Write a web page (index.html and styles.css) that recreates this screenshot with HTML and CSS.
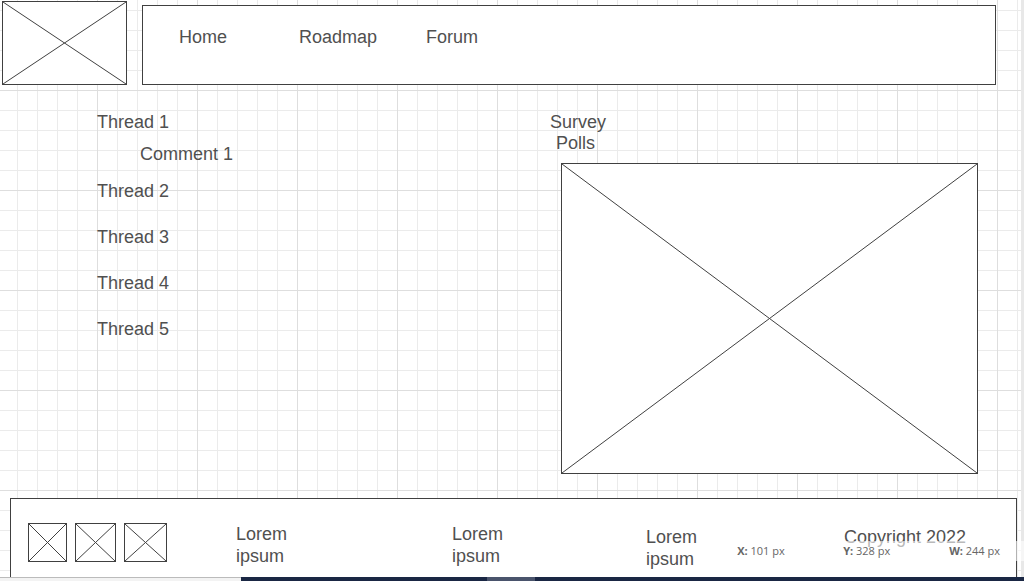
FILE: index.html
```html
<!DOCTYPE html>
<html lang="en">
<head>
<meta charset="utf-8">
<title>Forum wireframe</title>
<link rel="stylesheet" href="styles.css">
</head>
<body>
<div class="canvas">
  <header class="header">
    <svg class="placeholder logo" viewBox="0 0 100 100" preserveAspectRatio="none" role="img" aria-label="Logo"><path d="M0 0L100 100M100 0L0 100"/></svg>
    <nav class="nav">
      <a href="#home">Home</a>
      <a href="#roadmap">Roadmap</a>
      <a href="#forum">Forum</a>
    </nav>
  </header>

  <main class="main">
    <ul class="threads">
      <li>Thread 1
        <ul class="comments"><li>Comment 1</li></ul>
      </li>
      <li>Thread 2</li>
      <li>Thread 3</li>
      <li>Thread 4</li>
      <li>Thread 5</li>
    </ul>
    <section class="survey">
      <h2 class="survey-title">Survey<br>Polls&nbsp;</h2>
      <svg class="placeholder poll" viewBox="0 0 100 100" preserveAspectRatio="none" role="img" aria-label="Poll"><path d="M0 0L100 100M100 0L0 100"/></svg>
    </section>
  </main>

  <footer class="footer">
    <div class="socials">
      <svg class="placeholder social small" viewBox="0 0 100 100" preserveAspectRatio="none"><path d="M0 0L100 100M100 0L0 100"/></svg>
      <svg class="placeholder social medium" viewBox="0 0 100 100" preserveAspectRatio="none"><path d="M0 0L100 100M100 0L0 100"/></svg>
      <svg class="placeholder social large" viewBox="0 0 100 100" preserveAspectRatio="none"><path d="M0 0L100 100M100 0L0 100"/></svg>
    </div>
    <p class="footer-text">Lorem<br>ipsum</p>
    <p class="footer-text">Lorem<br>ipsum</p>
    <p class="footer-text lower">Lorem<br>ipsum</p>
    <p class="footer-text lower">Copyright 2022</p>
  </footer>

  <div class="status">
    <span><b>X:</b> 101 px</span>
    <span><b>Y:</b> 328 px</span>
    <span><b>W:</b> 244 px</span>
  </div>
</div>
<div class="taskbar">
  <div class="taskbar-search"></div>
  <div class="taskbar-apps"><div class="taskbar-active"></div></div>
</div>
</body>
</html>
```
FILE: styles.css
```css
* {
  box-sizing: border-box;
}

body {
  margin: 0;
  min-height: 100vh;
  display: flex;
  flex-direction: column;
  background: #fff;
  color: #505050;
  font: 18px/22px "Liberation Sans", Arial, sans-serif;
}

.canvas {
  position: relative;
  flex: 1;
  display: flex;
  flex-direction: column;
  border-right: 3px solid #e8e8e8;
  background-color: #fff;
  background-image:
    linear-gradient(#dedede 1px, transparent 1px),
    linear-gradient(90deg, #dedede 1px, transparent 1px),
    linear-gradient(#ebebeb 1px, transparent 1px),
    linear-gradient(90deg, #ebebeb 1px, transparent 1px);
  background-size: 100px 100px, 100px 100px, 20px 20px, 20px 20px;
  background-position: 97px 90px, 97px 90px, 17px 10px, 17px 10px;
}

.placeholder {
  display: block;
  background: #fff;
  border: 1px solid #404040;
  fill: none;
  stroke: #404040;
}

.placeholder path {
  vector-effect: non-scaling-stroke;
}

.header {
  display: flex;
  align-items: flex-end;
  gap: 15px;
  padding: 1px 25px 0 2px;
}

.logo {
  width: 125px;
  height: 84px;
}

.nav {
  flex: 1;
  display: grid;
  grid-template-columns: 120px 127px auto;
  padding: 20px 36px 36px;
  background: #fff;
  border: 1px solid #404040;
}

.nav a {
  color: inherit;
  text-decoration: none;
}

.main {
  flex: 1;
  display: grid;
  grid-template-columns: 549fr 472fr;
  padding: 26px 0 24px;
}

.threads,
.comments {
  margin: 0;
  padding: 0;
  list-style: none;
}

.threads {
  display: flex;
  flex-direction: column;
  gap: 24px;
  padding-left: 97px;
}

.comments {
  margin: 10px 0 -9px;
  padding-left: 43px;
}

.survey {
  padding-right: 43px;
}

.survey-title {
  width: 58px;
  margin: 0 0 9px;
  padding-top: 1px;
  font-size: 18px;
  font-weight: 400;
  line-height: 21px;
  text-align: center;
}

.poll {
  width: calc(100% - 12px);
  height: 311px;
  margin-left: 12px;
}

.footer {
  display: grid;
  grid-template-columns: 208fr 216fr 194fr 198fr 172fr;
  margin: 0 4px 0 10px;
  padding: 24px 0 7px 17px;
  background: #fff;
  border: 1px solid #404040;
  border-bottom: 0;
}

.socials {
  display: flex;
  gap: 8px;
}

.social {
  height: 39px;
}

.small {
  width: 39px;
}

.medium {
  width: 41px;
}

.large {
  width: 43px;
}

.footer-text {
  margin: 0;
}

.lower {
  padding-top: 3px;
}

.status {
  position: absolute;
  right: -3px;
  bottom: 16px;
  display: grid;
  grid-template-columns: 106px 106px auto;
  padding: 0 24px 0 8px;
  background: rgba(255, 255, 255, 0.6);
  color: #666;
  font: 11px/20px "Open Sans", "Noto Sans", sans-serif;
}

.taskbar {
  display: flex;
  height: 4px;
}

.taskbar-search {
  width: 241px;
  background: #f3f3f3;
  border-top: 1px solid #bbb;
}

.taskbar-apps {
  flex: 1;
  padding-left: 246px;
  background: #1a2744;
}

.taskbar-active {
  width: 48px;
  height: 4px;
  background: #4a546c;
}
```
